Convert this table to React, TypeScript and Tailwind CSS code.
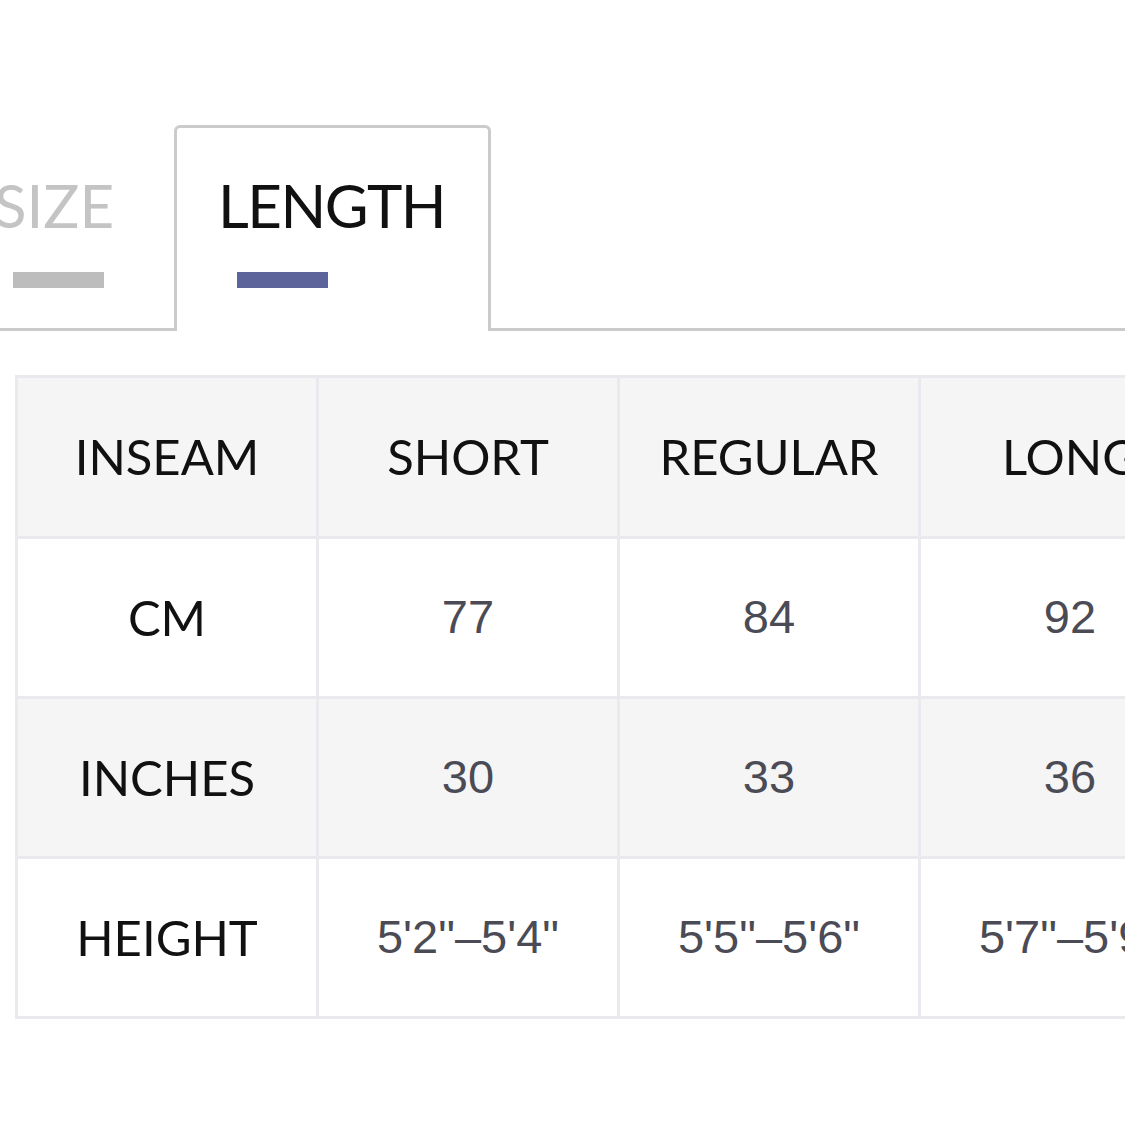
import React from 'react'

const HEAD = ['INSEAM', 'SHORT', 'REGULAR', 'LONG']

const ROWS: { label: string; values: string[]; shaded: boolean }[] = [
  { label: 'CM', values: ['77', '84', '92'], shaded: false },
  { label: 'INCHES', values: ['30', '33', '36'], shaded: true },
  { label: 'HEIGHT', values: ['5\'2"–5\'4"', '5\'5"–5\'6"', '5\'7"–5\'9"'], shaded: false },
]

const labelFont = { fontFamily: 'Lato, "Noto Sans", sans-serif' }
const valueFont = { fontFamily: '"Liberation Sans", Arial, sans-serif' }

function Tab({ label, active }: { label: string; active?: boolean }) {
  return (
    <div
      className={`flex flex-col border-[3px] border-b-0 rounded-t-[6px] pl-[41px] pt-[47px] pb-[43px] -mb-[3px] ${
        active ? 'w-[317px] border-[#cbcbcb] bg-white' : 'w-[224px] ml-[-50px] border-transparent'
      }`}
    >
      <span
        className={`text-[60px] leading-[60px] whitespace-nowrap ${
          active ? 'text-[#111111] tracking-[-1.5px]' : 'text-[#c4c4c4]'
        }`}
        style={labelFont}
      >
        {label}
      </span>
      <span className={`mt-[37px] ml-[19px] w-[91px] h-[16px] ${active ? 'bg-[#5d6499]' : 'bg-[#bdbdbd]'}`} />
    </div>
  )
}

export default function App() {
  return (
    <div className="w-[1125px] h-[1125px] overflow-hidden bg-white">
      <div className="pt-[125px]">
        <div className="flex items-end border-b-[3px] border-[#cbcbcb]">
          <Tab label="SIZE" />
          <Tab label="LENGTH" active />
        </div>
      </div>

      {/* length table, last column runs off the edge */}
      <div className="ml-[15px] mt-[44px] w-max grid grid-cols-[repeat(4,301px)] border-t-[3px] border-l-[3px] border-[#e9e9ee]">
        {HEAD.map(h => (
          <div
            key={h}
            className="h-[161px] flex items-center justify-center bg-[#f5f5f6] border-r-[3px] border-b-[3px] border-[#e9e9ee] text-[49px] text-[#111111] whitespace-nowrap"
            style={labelFont}
          >
            {h}
          </div>
        ))}
        {ROWS.map(r => (
          <React.Fragment key={r.label}>
            <div
              className={`h-[160px] flex items-center justify-center border-r-[3px] border-b-[3px] border-[#e9e9ee] text-[49px] text-[#111111] whitespace-nowrap ${
                r.shaded ? 'bg-[#f5f5f6]' : 'bg-white'
              }`}
              style={labelFont}
            >
              {r.label}
            </div>
            {r.values.map((v, i) => (
              <div
                key={i}
                className={`h-[160px] flex items-center justify-center border-r-[3px] border-b-[3px] border-[#e9e9ee] text-[47px] text-[#4b4b55] whitespace-nowrap ${
                  r.shaded ? 'bg-[#f5f5f6]' : 'bg-white'
                }`}
                style={valueFont}
              >
                {v}
              </div>
            ))}
          </React.Fragment>
        ))}
      </div>
    </div>
  )
}
